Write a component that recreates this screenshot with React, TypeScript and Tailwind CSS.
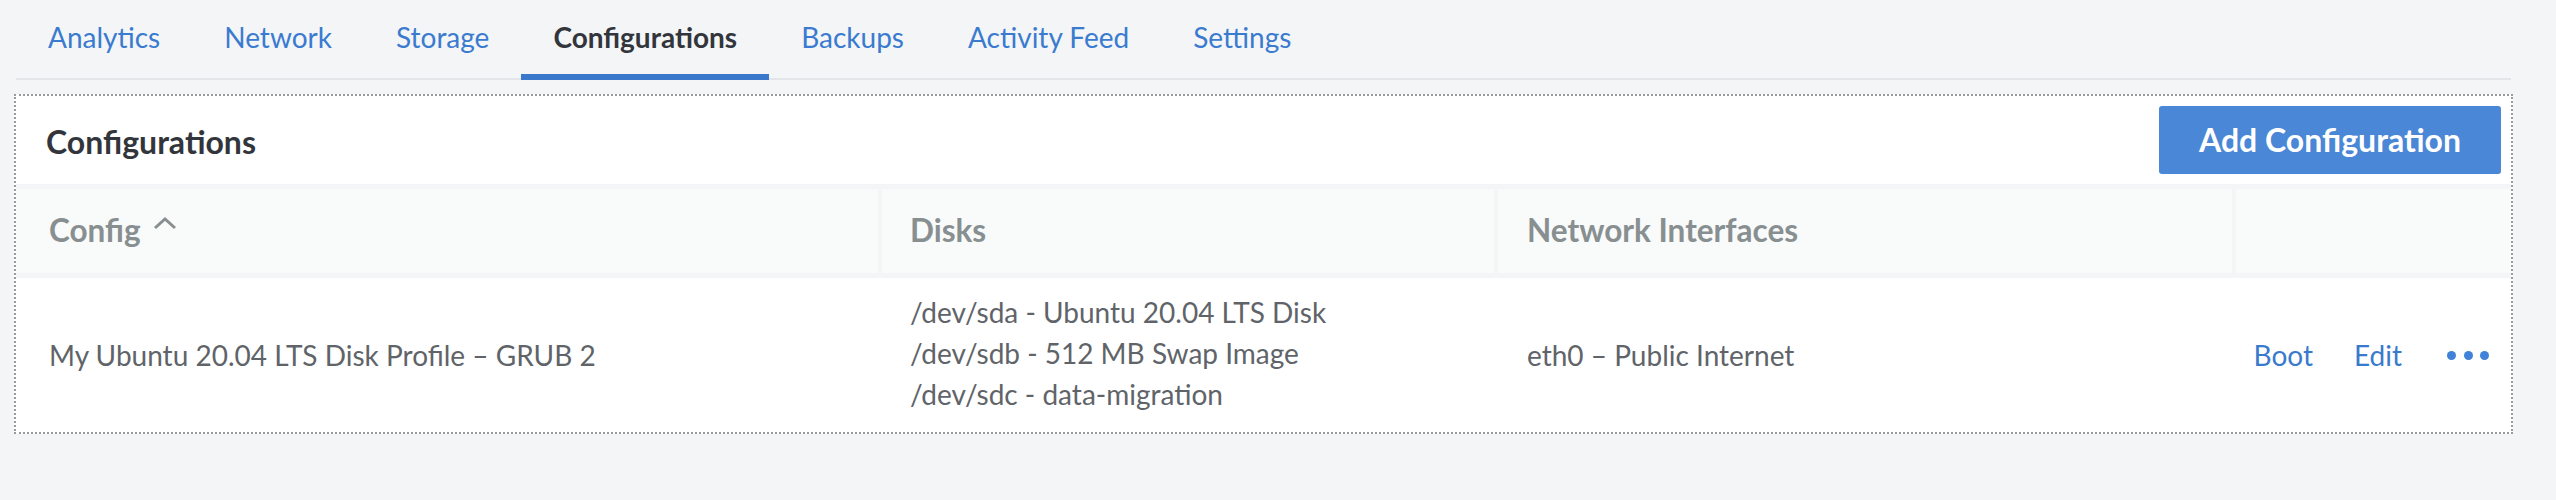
import React from "react";

const tabs = ["Analytics", "Network", "Storage", "Configurations", "Backups", "Activity Feed", "Settings"];
const active = "Configurations";

const cols = "grid grid-cols-[862px_612px_734px_1fr] gap-x-[4px]";

export default function App() {
  return (
    <div
      className="min-h-[500px] w-full bg-[#f4f5f6] pl-[14px] pr-[43px]"
      style={{ fontFamily: "Lato, 'Open Sans', 'Liberation Sans', sans-serif" }}
    >
      {/* tab strip */}
      <div className="relative mx-[2px] flex h-[80px] border-b-2 border-[#e3e5e8]">
        {tabs.map((t) => (
          <div
            key={t}
            className={
              "relative flex items-center px-[32px] pb-[4px] text-[28px] " +
              (t === active ? "font-bold text-[#32363c]" : "text-[#3a7bd0]")
            }
          >
            {t}
            {t === active && (
              <span className="absolute bottom-[-2px] left-0 right-0 h-[6px] bg-[#3a78cb]" />
            )}
          </div>
        ))}
      </div>

      {/* configurations panel */}
      <div className="mt-[14px] border-2 border-dotted border-[#9a9a9a] bg-white">
        <div className="flex h-[88px] items-center justify-between pl-[30px] pr-[10px]">
          <h2 className="pt-[4px] text-[32px] font-bold text-[#32363c]">Configurations</h2>
          <button className="flex h-[68px] w-[342px] items-center justify-center rounded-[3px] bg-[#4a87d6] text-[32px] font-bold text-white">
            Add Configuration
          </button>
        </div>

        {/* table header */}
        <div className={cols + " border-y-[5px] border-[#f4f5f6] bg-[#f4f5f6]"}>
          <div className="flex h-[84px] items-center gap-[12px] bg-[#f9fafa] pl-[33px] text-[31.5px] font-bold text-[#888f91]">
            Config
            <svg width="24" height="14" viewBox="0 0 24 14" className="mb-[16px]">
              <path d="M2 12 L12 3 L22 12" fill="none" stroke="#888f91" strokeWidth="3" />
            </svg>
          </div>
          <div className="flex h-[84px] items-center bg-[#f9fafa] pl-[28px] text-[31.5px] font-bold text-[#888f91]">
            Disks
          </div>
          <div className="flex h-[84px] items-center bg-[#f9fafa] pl-[29px] text-[31.5px] font-bold text-[#888f91]">
            Network Interfaces
          </div>
          <div className="h-[84px] bg-[#f9fafa]" />
        </div>

        {/* row */}
        <div className={cols + " h-[154px] text-[28px] text-[#606469]"}>
          <div className="flex items-center pl-[33px]">My Ubuntu 20.04 LTS Disk Profile – GRUB 2</div>
          <div className="flex flex-col justify-center pb-[4px] pl-[28px] leading-[41px]">
            <span>/dev/sda - Ubuntu 20.04 LTS Disk</span>
            <span>/dev/sdb - 512 MB Swap Image</span>
            <span>/dev/sdc - data-migration</span>
          </div>
          <div className="flex items-center pl-[29px]">eth0 – Public Internet</div>
          <div className="flex items-center justify-end gap-[41px] pr-[22px] text-[#3a7acd]">
            <span>Boot</span>
            <span>Edit</span>
            <span className="ml-[4px] flex gap-[7.5px]">
              <span className="h-[9px] w-[9px] rounded-full bg-[#3f82d8]" />
              <span className="h-[9px] w-[9px] rounded-full bg-[#3f82d8]" />
              <span className="h-[9px] w-[9px] rounded-full bg-[#3f82d8]" />
            </span>
          </div>
        </div>
      </div>
    </div>
  );
}
